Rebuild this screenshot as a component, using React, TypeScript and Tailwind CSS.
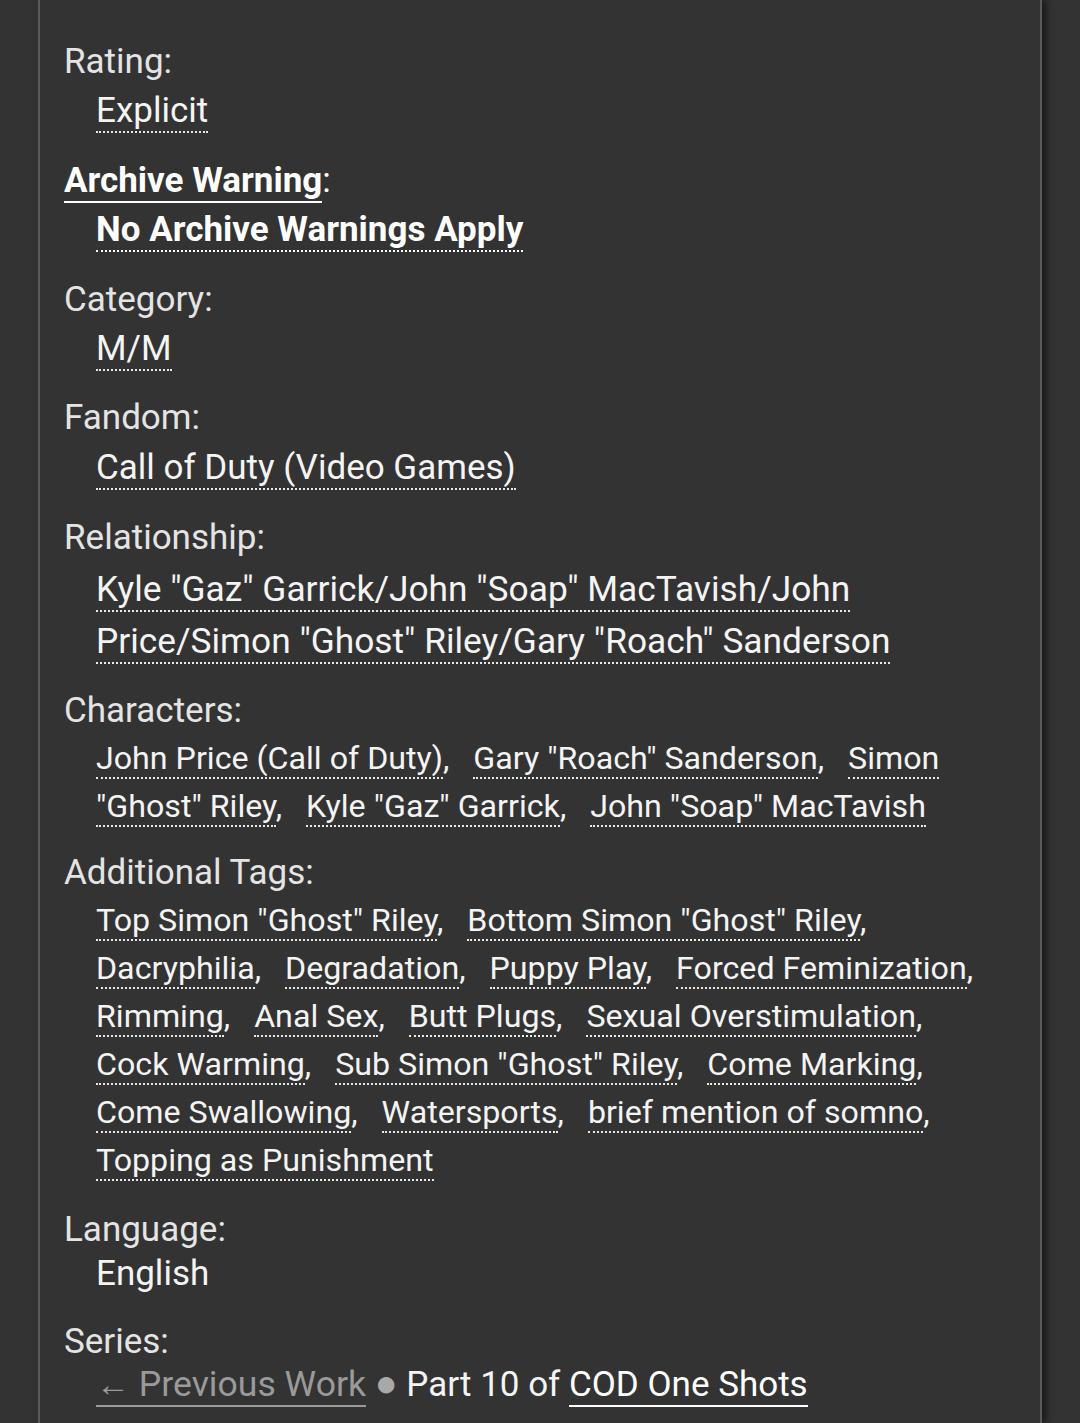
import React from "react";

const characters = [
  "John Price (Call of Duty)",
  'Gary "Roach" Sanderson',
  'Simon "Ghost" Riley',
  'Kyle "Gaz" Garrick',
  'John "Soap" MacTavish',
];

const freeforms = [
  'Top Simon "Ghost" Riley',
  'Bottom Simon "Ghost" Riley',
  "Dacryphilia",
  "Degradation",
  "Puppy Play",
  "Forced Feminization",
  "Rimming",
  "Anal Sex",
  "Butt Plugs",
  "Sexual Overstimulation",
  "Cock Warming",
  'Sub Simon "Ghost" Riley',
  "Come Marking",
  "Come Swallowing",
  "Watersports",
  "brief mention of somno",
  "Topping as Punishment",
];

const tagLink = "border-b-2 border-dotted border-[#e8e8e8] text-[#f4f4f4]";

function Label({ children }: { children: React.ReactNode }) {
  return <dt className="leading-[50px] text-[#e4e4e4]">{children}</dt>;
}

// characters / freeform lists render a touch smaller than the single-value rows
function TagList({ tags }: { tags: string[] }) {
  return (
    <ul className="inline text-[32.2px]">
      {tags.map((t, i) => (
        <li key={t} className="inline">
          <a className={tagLink}>{t}</a>
          {i < tags.length - 1 && (
            <>
              <span className="mr-[16px] text-[#f4f4f4]">,</span>{" "}
            </>
          )}
        </li>
      ))}
    </ul>
  );
}

export default function App() {
  return (
    <div className="min-h-[1423px] bg-[#333333] font-['Roboto','Liberation_Sans',sans-serif] text-[35px]">
      <div className="ml-[38px] w-[1004px] min-h-[1423px] border-x-2 border-[#5a5a5a] bg-[#333333] pl-[24px] pr-[30px] pt-[37px] shadow-[5px_0_6px_rgba(0,0,0,0.45)]">
        <dl>
          <Label>Rating:</Label>
          <dd className="ml-[32px] mb-[21px] leading-[48px]">
            <a className={tagLink}>Explicit</a>
          </dd>

          <dt className="leading-[50px] font-bold text-white">
            <a className="border-b-2 border-white">Archive Warning</a>
            <span className="font-normal">:</span>
          </dt>
          <dd className="ml-[32px] mb-[21px] leading-[48px] font-bold">
            <a className="border-b-2 border-dotted border-white text-white">No Archive Warnings Apply</a>
          </dd>

          <Label>Category:</Label>
          <dd className="ml-[32px] mb-[20px] leading-[48px]">
            <a className={tagLink}>M/M</a>
          </dd>

          <Label>Fandom:</Label>
          <dd className="ml-[32px] mb-[20px] leading-[50px]">
            <a className={tagLink}>Call of Duty (Video Games)</a>
          </dd>

          <Label>Relationship:</Label>
          <dd className="ml-[32px] mb-[19px] leading-[52px] text-[35.3px]">
            <a className={tagLink}>
              Kyle "Gaz" Garrick/John "Soap" MacTavish/John Price/Simon "Ghost" Riley/Gary "Roach" Sanderson
            </a>
          </dd>

          <Label>Characters:</Label>
          <dd className="ml-[32px] -mt-[2px] mb-[18px] leading-[48px]">
            <TagList tags={characters} />
          </dd>

          <Label>Additional Tags:</Label>
          <dd className="ml-[32px] -mt-[2px] mb-[21px] leading-[48px]">
            <TagList tags={freeforms} />
          </dd>

          <Label>Language:</Label>
          <dd className="ml-[32px] -mt-[2px] mb-[22px] leading-[42px] text-[#f4f4f4]">English</dd>

          <Label>Series:</Label>
          <dd className="ml-[32px] -mt-[4px] leading-[42px] text-[#f4f4f4]">
            <span className="border-b-2 border-[#9a9a9a] text-[35.6px] text-[#9a9a9a]">
              <span className="text-[34px]">←</span> Previous Work
            </span>{" "}
            <span className="text-[#a8a8a8] text-[38px] leading-[0]">●</span> Part 10 of{" "}
            <a className="border-b-2 border-white text-white">COD One Shots</a>
          </dd>
        </dl>
      </div>
    </div>
  );
}
